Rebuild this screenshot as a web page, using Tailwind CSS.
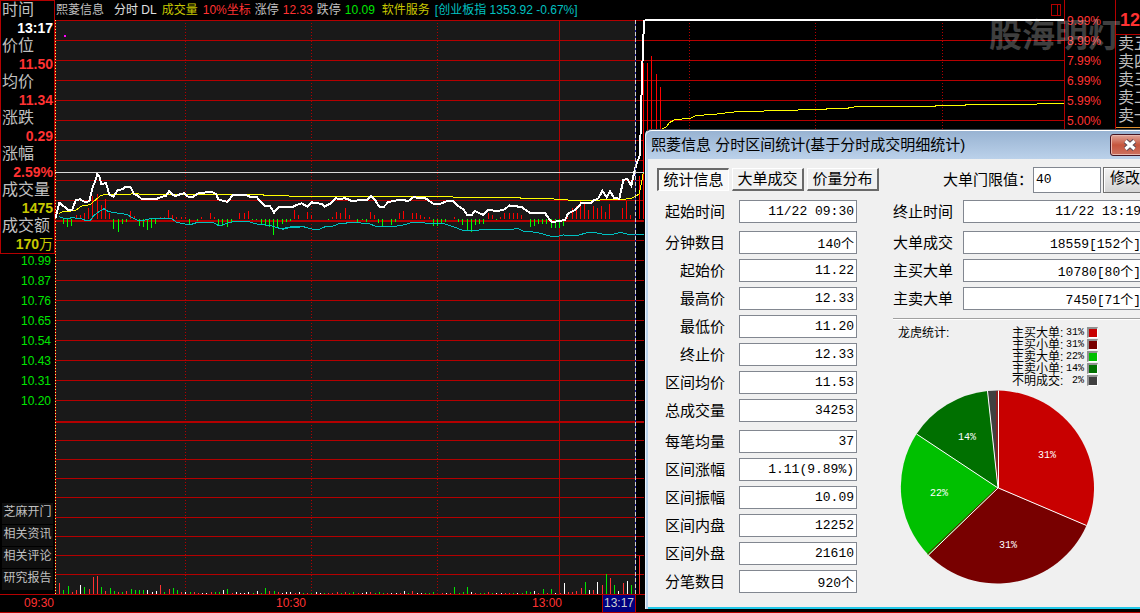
<!DOCTYPE html>
<html lang="zh-CN">
<head>
<meta charset="utf-8">
<title>熙菱信息 分时</title>
<script src="https://cdn.jsdelivr.net/npm/@tailwindcss/browser@4"></script>
</head>
<body class="bg-black">
<div class="relative min-h-screen overflow-hidden bg-black text-xs text-[#c0c0c0] font-['Liberation_Sans','Noto_Sans_CJK_SC',sans-serif]">
  <div class="flex">
    <!-- Quote sidebar -->
    <aside class="flex w-[55px] shrink-0 flex-col">
      <dl class="border border-[#b40000] text-base leading-[18px] whitespace-nowrap [&>dd]:pr-px [&>dd]:text-right [&>dd]:text-sm [&>dd]:leading-[18px] [&>dd]:font-bold [&>dt]:h-[18px] [&>dt]:pl-px">
        <dt>时间</dt><dd class="text-white">13:17</dd>
        <dt>价位</dt><dd class="text-[#ff3232]">11.50</dd>
        <dt>均价</dt><dd class="text-[#ff3232]">11.34</dd>
        <dt>涨跌</dt><dd class="text-[#ff3232]">0.29</dd>
        <dt>涨幅</dt><dd class="text-[#ff3232]">2.59%</dd>
        <dt>成交量</dt><dd class="text-[#c8c800]">1475</dd>
        <dt>成交额</dt><dd class="text-[#c8c800]">170<span class="font-normal">万</span></dd>
      </dl>
      <ol class="-mt-[3px] pr-1 text-right leading-5 text-[#00e600] [&>li]:h-5">
        <li>10.99</li><li>10.87</li><li>10.76</li><li>10.65</li><li>10.54</li><li>10.43</li><li>10.31</li><li>10.20</li>
      </ol>
      <nav class="mt-auto flex flex-col gap-px px-0.5 pb-1 [&>button]:h-[21px] [&>button]:bg-[#0f0f0f] [&>button]:pb-0.5 [&>button]:leading-[17px] [&>button]:whitespace-nowrap">
        <button type="button">芝麻开门</button>
        <button type="button">相关资讯</button>
        <button type="button">相关评论</button>
        <button type="button">研究报告</button>
      </nav>
    </aside>

    <!-- Intraday chart -->
    <main class="min-w-0 flex-1">
      <header class="flex h-5 items-center whitespace-nowrap">
        <h1 class="ml-px">熙菱信息</h1>
        <span class="ml-[10px] text-[#e0e0e0]">分时 DL</span>
        <span class="ml-[5px] text-[#c8c800]">成交量</span>
        <span class="ml-[5px] text-[#ff3232]">10%坐标</span>
        <span class="ml-1">涨停</span>
        <span class="ml-1 text-[#ff3232]">12.33</span>
        <span class="ml-1">跌停</span>
        <span class="ml-1 text-[#00e600]">10.09</span>
        <span class="ml-[7px] text-[#c8c800]">软件服务</span>
        <span class="ml-[5px] text-[#00c0c0]">[创业板指 1353.92 -0.67%]</span>
        <svg class="mr-0.5 ml-auto h-3 w-[11px]" viewBox="0 0 11 12" fill="#b40000" shape-rendering="crispEdges"><path d="M0 0h10v12H0zM1 1v10h5V1zM7 1v10h2V1z" fill-rule="evenodd"/></svg>
      </header>
      <svg id="chart" class="block h-[574px] w-full overflow-visible" viewBox="165 60 3027 1722" preserveAspectRatio="none" fill="none" stroke-width="3" shape-rendering="crispEdges">
        <rect x="168" y="60" width="1738" height="1722" fill="#191919"/>
        <g stroke="#b40000">
          <path d="M165 61.5H3192M165 121.5H3192M165 181.5H3192M165 241.5H3192M165 301.5H3192M165 361.5H3192M165 421.5H1932M165 481.5H1932M165 541.5H1932M165 601.5H1932M165 721.5H1932M165 781.5H1932M165 841.5H1932M165 901.5H1932M165 961.5H1932M165 1021.5H1932M165 1081.5H1932M165 1141.5H1932M165 1201.5H1932M165 1321.5H1932M165 1378.5H1932M165 1435.5H1932M165 1492.5H1932M165 1552.5H1932M165 1609.5H1932M165 1666.5H1932M165 1723.5H1932"/>
          <path d="M165 663H1932M165 1266H1932" stroke-width="6"/>
          <path d="M556.5 69V1782M934.5 69V1782M1312.5 69V1782M2068.5 69V600M2446.5 69V600M2827.5 69V600" stroke-dasharray="3 6"/>
        </g>
        <path d="M1677 60h3V1782h-3zM165 60h3V1782h-3z" fill="#b40000"/>
        <path d="M166.5 60V1782" stroke="#ffff60" stroke-dasharray="3 6"/>
        <rect x="192" y="105" width="6" height="6" fill="#ff00ff"/>
        <g id="bars"></g>
        <path d="M165 517.5H1932" stroke="#d8d8d8"/>
        <polyline stroke="#00c0c0" points="178,650 195,656 220,653 245,657 262,663 272,660 280,648 300,633 312,626 325,635 345,638 380,643 395,652 410,660 435,660 455,655 480,657 515,656 530,667 568,675 590,668 640,668 658,678 680,670 700,665 745,665 775,673 810,676 848,688 880,680 900,679 840,687 875,680 890,682 910,680 935,687 958,688 980,678 1000,678 1020,670 1060,668 1105,670 1130,680 1180,680 1215,674 1235,667 1265,667 1290,672 1330,670 1360,680 1385,690 1420,692 1455,688 1515,689 1555,686 1570,693 1610,697 1650,708 1670,710 1690,705 1735,706 1760,698 1785,698 1805,702 1840,703 1860,697 1885,703 1932,703"/>
        <polyline stroke="#ffff00" points="178,640 188,635 225,632 245,618 270,614 290,597 300,588 315,583 390,583 402,580 425,583 790,583 792,586 865,586 868,589 1358,589 1360,592 1560,592 1562,595 1660,595 1662,598 1725,601 1800,601 1802,598 1870,598 1895,595 1918,582 1925,545 1930,518"/>
        <polyline stroke="#ffff00" points="1986,386 1998,382 2008,368 2025,359 2070,355 2088,347 2150,342 2210,335 2290,334 2294,332 2365,331 2450,328 2540,325 2568,320 2640,319 2805,319 2808,316 2895,316 2898,313 3110,313 3112,310 3192,310"/>
        <polyline stroke="#ffffff" stroke-width="6" points="166,655 170,640 178,608 190,618 205,630 216,630 228,600 240,598 255,606 268,604 272,585 278,562 285,545 292,522 298,530 304,552 318,549 328,584 340,590 354,570 366,568 378,560 392,562 402,582 412,586 425,597 470,597 478,593 498,587 508,573 520,585 528,588 540,583 552,580 565,590 580,590 595,580 635,575 648,582 655,598 682,606 698,586 740,586 752,591 770,591 782,605 795,618 810,618 822,638 835,622 878,621 892,614 905,610 922,620 934,607 965,612 974,620 990,611 1008,595 1022,598 1032,594 1045,598 1055,604 1080,600 1102,599 1112,588 1125,600 1138,620 1152,620 1165,606 1190,601 1212,600 1224,604 1240,592 1275,594 1300,611 1322,611 1340,604 1360,604 1370,615 1390,628 1402,645 1416,644 1425,633 1450,645 1463,630 1495,633 1515,628 1528,616 1540,618 1565,621 1590,639 1635,639 1648,658 1658,667 1675,663 1695,660 1704,641 1728,628 1745,608 1772,610 1780,602 1795,595 1807,573 1820,592 1830,573 1842,594 1858,596 1870,540 1882,537 1894,557 1902,520 1910,490 1920,465 1924,305 1926,225 1929,143 1932,62 1944,60"/>
        <path d="M1935 57H3192v6H1935z" fill="#fff"/>
        <path d="M1905 60h3V1782h-3z" fill="#2020a0"/>
        <path d="M1906.500 60V1782" stroke="#d0d0d0" stroke-dasharray="12 6"/>
      </svg>
    </main>

    <!-- Percentage scale -->
    <ol class="w-[51px] shrink-0 border-l border-[#b40000] pt-[11px] pl-0.5 leading-5 text-[#ff3232]">
      <li>9.99%</li><li>8.99%</li><li>7.99%</li><li>6.99%</li><li>5.99%</li><li>5.00%</li>
    </ol>

    <!-- Sell queue -->
    <section class="w-[25px] shrink-0 overflow-hidden border-l border-[#b40000] whitespace-nowrap">
      <p class="h-[35px] border-b border-[#b40000] pt-1.5 pl-1 text-lg font-bold text-[#ff3232]">12.33</p>
      <ul class="h-[93px] border-b border-[#e09030] pl-0.5 text-base leading-[18px]">
        <li>卖五</li><li>卖四</li><li>卖三</li><li>卖二</li><li>卖一</li>
      </ul>
    </section>
  </div>

  <!-- Time axis -->
  <footer class="flex h-[19px] border-y border-[#b40000] leading-[17px] text-[#ff3232]">
    <time class="ml-6 w-[30px]">09:30</time>
    <time class="ml-[222px] w-[30px]">10:30</time>
    <time class="ml-[226px] w-[30px]">13:00</time>
    <time class="ml-10 w-[34px] border-x border-[#b40000] bg-[#000080] pl-px text-[#d0d0d0]">13:17</time>
  </footer>

  <div class="pointer-events-none absolute top-3 right-[19px] text-[33px] leading-[48px] font-bold whitespace-nowrap text-white/25">股海明灯</div>

  <!-- Range statistics window -->
  <section role="dialog" aria-labelledby="dlg" class="absolute top-[129px] left-[645px] w-[514px] rounded-t-md border border-b-0 border-[#404850] border-l-[#e8f2fc] bg-[#b9d1ea] pl-0.5 text-[15px] text-black">
    <div class="-ml-0.5 flex h-[29px] items-center rounded-t-md border-t border-white bg-linear-to-b from-[#98b3d2] to-[#bbd1ea] pl-[3px]">
      <h2 id="dlg" class="pl-0.5 whitespace-nowrap">熙菱信息 分时区间统计(基于分时成交明细统计)</h2>
      <button type="button" aria-label="关闭" class="mr-1 ml-auto flex h-[22px] w-[44px] items-center rounded-[3px] border border-[#431422] bg-linear-to-b from-[#e0a599] via-[#c5553d] via-50% to-[#cc7160] pl-[11px] shadow-[inset_0_0_0_1px_#e8b8ae]">
        <svg class="h-3 w-4" viewBox="0 0 16 12"><path d="M3.500 2l9 8M12.500 2l-9 8" stroke="#5a4a55" stroke-width="5.200"/><path d="M3.500 2l9 8M12.500 2l-9 8" stroke="#fff" stroke-width="3.200"/></svg>
      </button>
    </div>
    <div class="border-b-2 border-[#20c8e8] bg-[#f0f0f0] pt-[7px] pb-[14px] pl-[9px]">
      <div class="flex h-[27px] items-center whitespace-nowrap">
        <button type="button" class="h-[23px] w-[72px] border-t-2 border-r border-b border-l-2 border-t-[#696969] border-r-white border-b-white border-l-[#696969] bg-[#f8f8f8] leading-5">统计信息</button>
        <button type="button" class="ml-[3px] h-[23px] w-[72px] border-t border-r-2 border-b-2 border-l border-t-white border-r-[#696969] border-b-[#696969] border-l-white bg-[#f0f0f0] leading-5">大单成交</button>
        <button type="button" class="ml-[3px] h-[23px] w-[72px] border-t border-r-2 border-b-2 border-l border-t-white border-r-[#696969] border-b-[#696969] border-l-white bg-[#f0f0f0] leading-5">价量分布</button>
        <label for="limit" class="ml-16 w-[90px]">大单门限值：</label>
        <input id="limit" value="40" class="h-[26px] w-[68px] border border-[#828790] bg-white pl-0.5 text-[13px] leading-6 font-['Liberation_Mono','Noto_Sans_CJK_SC',monospace]">
        <button type="button" class="ml-0.5 h-[26px] w-[52px] border border-[#707070] bg-linear-to-b from-[#f4f4f4] to-[#d4d4d4] pb-1 pl-1.5 text-left leading-5 shadow-[inset_1px_1px_0_#fff]">修改</button>
      </div>
      <div class="flex pt-[7px]">
        <div class="flex w-[200px] shrink-0 flex-col gap-2" data-fields="left"></div>
        <div class="ml-9 flex min-w-0 flex-1 flex-col">
          <div class="flex flex-col gap-2" data-fields="right"></div>
          <div class="mt-2 flex border-t border-[#a0a0a0] pt-2 text-xs shadow-[inset_0_1px_0_#fff]">
            <h3 class="ml-[5px] w-[114px] leading-3">龙虎统计:</h3>
            <ul class="text-xs leading-3 [&_b]:w-[18px] [&_b]:text-right [&_b]:text-[10px] [&_b]:leading-3 [&_b]:font-normal [&_b]:font-['Liberation_Mono',monospace] [&_em]:w-1.5 [&_em]:not-italic [&_i]:ml-[3px] [&_i]:size-[11px] [&_i]:border-t-2 [&_i]:border-r [&_i]:border-b [&_i]:border-l-2 [&_i]:border-t-[#909090] [&_i]:border-r-white [&_i]:border-b-white [&_i]:border-l-[#909090] [&>li]:flex [&>li]:h-3">
              <li><span>主买大单</span><em>:</em><b>31%</b><i class="bg-[#c80000]"></i></li>
              <li><span>主买小单</span><em>:</em><b>31%</b><i class="bg-[#780000]"></i></li>
              <li><span>主卖大单</span><em>:</em><b>22%</b><i class="bg-[#00c000]"></i></li>
              <li><span>主卖小单</span><em>:</em><b>14%</b><i class="bg-[#007000]"></i></li>
              <li><span>不明成交</span><em>:</em><b>2%</b><i class="bg-[#404040]"></i></li>
            </ul>
          </div>
          <svg class="mt-0.5 ml-1.5 h-[198px] w-[198px]" viewBox="0 0 198 198" font-size="10" text-anchor="middle" font-family="Liberation Mono, monospace">
            <path fill="#c80000" d="M99 99V1.500A97.500 97.500 0 0 1 187.500 136.500z"/>
            <path fill="#780000" d="M99 99L187.500 136.500A97.500 97.500 0 0 1 29.500 166z"/>
            <path fill="#00c000" d="M99 99L29.500 166A97.500 97.500 0 0 1 17.500 45z"/>
            <path fill="#007000" d="M99 99L17.500 45A97.500 97.500 0 0 1 88.500 2z"/>
            <path fill="#404040" d="M99 99L88.500 2A97.500 97.500 0 0 1 99 1.500z"/>
            <path stroke="#780000" d="M98 99L28.500 165"/>
            <path stroke="#c80000" d="M98 90V2"/>
            <path stroke="#fff" d="M99.500 1.500V99L187.500 136.500M99 99L29.500 166M99 99L17.500 45M99 99L88.500 2" fill="none"/>
            <g fill="#fff"><text x="148" y="69">31%</text><text x="109" y="159">31%</text><text x="40" y="107">22%</text><text x="68" y="51">14%</text></g>
          </svg>
        </div>
      </div>
    </div>
  </section>
</div>

<template id="field-left">
  <div class="flex h-[23px] items-center"><label class="w-[68px] text-right whitespace-nowrap"></label><input readonly class="ml-[14px] h-[23px] w-[118px] border border-[#828790] bg-white pr-0.5 text-right text-[13px] leading-[21px] font-['Liberation_Mono','Noto_Sans_CJK_SC',monospace]"></div>
</template>
<template id="field-right">
  <div class="flex h-[23px] items-center"><label class="w-[60px] whitespace-nowrap"></label><input readonly class="ml-[10px] h-[23px] w-[184px] border border-[#828790] bg-white pr-[5px] text-right text-[13px] leading-[21px] font-['Liberation_Mono','Noto_Sans_CJK_SC',monospace]"></div>
</template>
<script>
// Field groups; groups are separated by a wider gap than the rows inside them.
const fields = {
  left: [[['起始时间','11/22 09:30']],
    [['分钟数目','140个'],['起始价','11.22'],['最高价','12.33'],['最低价','11.20'],['终止价','12.33'],['区间均价','11.53'],['总成交量','34253']],
    [['每笔均量','37'],['区间涨幅','1.11(9.89%)'],['区间振幅','10.09'],['区间内盘','12252'],['区间外盘','21610'],['分笔数目','920个']]],
  right: [[['终止时间','11/22 13:19']],
    [['大单成交','18559[152个]'],['主买大单','10780[80个]'],['主卖大单','7450[71个]']]]
};
for (const side in fields) {
  const host = document.querySelector(`[data-fields=${side}]`);
  fields[side].forEach((rows, g) => {
    const group = document.createElement('div');
    group.className = 'flex flex-col gap-[5px]';
    rows.forEach(([name, value], r) => {
      const row = document.getElementById('field-' + side).content.cloneNode(true);
      const label = row.querySelector('label'), input = row.querySelector('input');
      label.textContent = name; label.htmlFor = input.id = `${side}-${g}-${r}`;
      input.setAttribute('value', value);
      group.append(row);
    });
    host.append(group);
  });
}
// Bars as x:y pairs; force bars hang from y=657, volume bars stand on y=1782.
const pairs = s => s.split(' ').map(p => p.split(':').map(Number));
const force = {
  '#ff0000': '230:645 242:645 254:640 266:624 278:590 293:582 305:615 317:597 329:640 392:635 404:650 481:651 493:651 506:630 517:645 530:651 545:651 557:651 605:651 631:640 643:651 718:640 733:640 746:635 883:630 895:645 922:638 935:645 997:651 1009:636 1021:640 1036:624 1048:645 1111:638 1123:645 1198:639 1210:635 1237:639 1249:639 1261:645 1274:651 1288:651 1363:651 1465:640 1477:645 1501:651 1513:640 1528:640 1540:640 1553:640 1565:645 1703:640 1717:625 1729:618 1741:603 1753:608 1766:630 1780:618 1792:625 1804:618 1816:636 1828:612 1867:624 1879:603 1891:645 1918:528 1930:190 1942:190 1954:168 1969:222 1981:262',
  '#00ff00': '190:672 203:682 215:678 341:687 355:698 368:672 380:666 418:680 430:682 442:692 455:686 467:672 568:675 593:663 655:678 668:679 682:681 695:668 758:660 770:660 785:672 797:680 809:682 821:705 833:681 847:672 859:666 871:665 985:660 1072:666 1086:660 1099:666 1135:670 1147:678 1174:677 1186:668 1300:678 1312:678 1324:672 1337:668 1375:666 1387:677 1402:690 1414:698 1427:677 1438:672 1450:672 1489:660 1592:681 1603:678 1615:672 1627:672 1640:672 1654:684 1666:684 1678:684 1691:678'
};
const volume = {
  '#ff3232': '178:33 217:6 229:12 268:15 280:51 292:54 316:9 355:6 379:9 481:27 508:15 544:6 583:6 595:3 634:6 697:3 808:9 835:6 886:3 922:3 985:3 997:3 1012:6 1036:6 1075:3 1111:6 1162:3 1201:3 1237:9 1327:3 1351:3 1426:3 1465:6 1516:3 1528:3 1615:3 1642:3 1681:3 1705:6 1717:6 1729:9 1744:18 1780:12 1807:27 1831:48 1870:33 1918:114',
  '#00e600': '190:12 205:24 253:20 304:21 331:18 343:9 367:6 394:15 406:12 418:12 430:12 493:6 520:18 532:12 571:6 646:6 658:6 682:15 760:3 784:3 796:18 823:9 910:3 934:3 973:3 1024:3 1048:3 1060:6 1126:3 1138:6 1150:3 1225:3 1276:3 1288:3 1300:6 1363:21 1378:3 1390:6 1402:21 1441:3 1453:3 1477:3 1540:3 1567:3 1579:9 1591:6 1630:15 1654:15 1756:36 1819:60 1843:27 1894:27',
  '#ffffff': '241:27 442:12 457:6 469:9 556:6 607:3 619:3 670:12 709:6 721:3 733:3 745:6 772:9 847:3 859:6 871:6 898:6 949:6 961:3 1087:3 1099:6 1174:3 1189:3 1213:9 1252:3 1264:3 1339:3 1414:6 1489:3 1504:3 1552:3 1603:9 1666:3 1693:33 1768:12 1792:36 1855:9 1882:39'
};
const bars = document.getElementById('bars');
const draw = (color, d) => {
  const path = document.createElementNS('http://www.w3.org/2000/svg', 'path');
  path.setAttribute('fill', color); path.setAttribute('d', d); bars.append(path);
};
const snap = v => Math.floor(v / 3) * 3;
for (const c in force) draw(c, pairs(force[c]).map(([x, y]) => `M${snap(x)} 657h3V${snap(y)}h-3z`).join(''));
for (const c in volume) draw(c, pairs(volume[c]).map(([x, h]) => `M${snap(x)} 1782h3v${-h}h-3z`).join(''));
</script>
</body>
</html>
